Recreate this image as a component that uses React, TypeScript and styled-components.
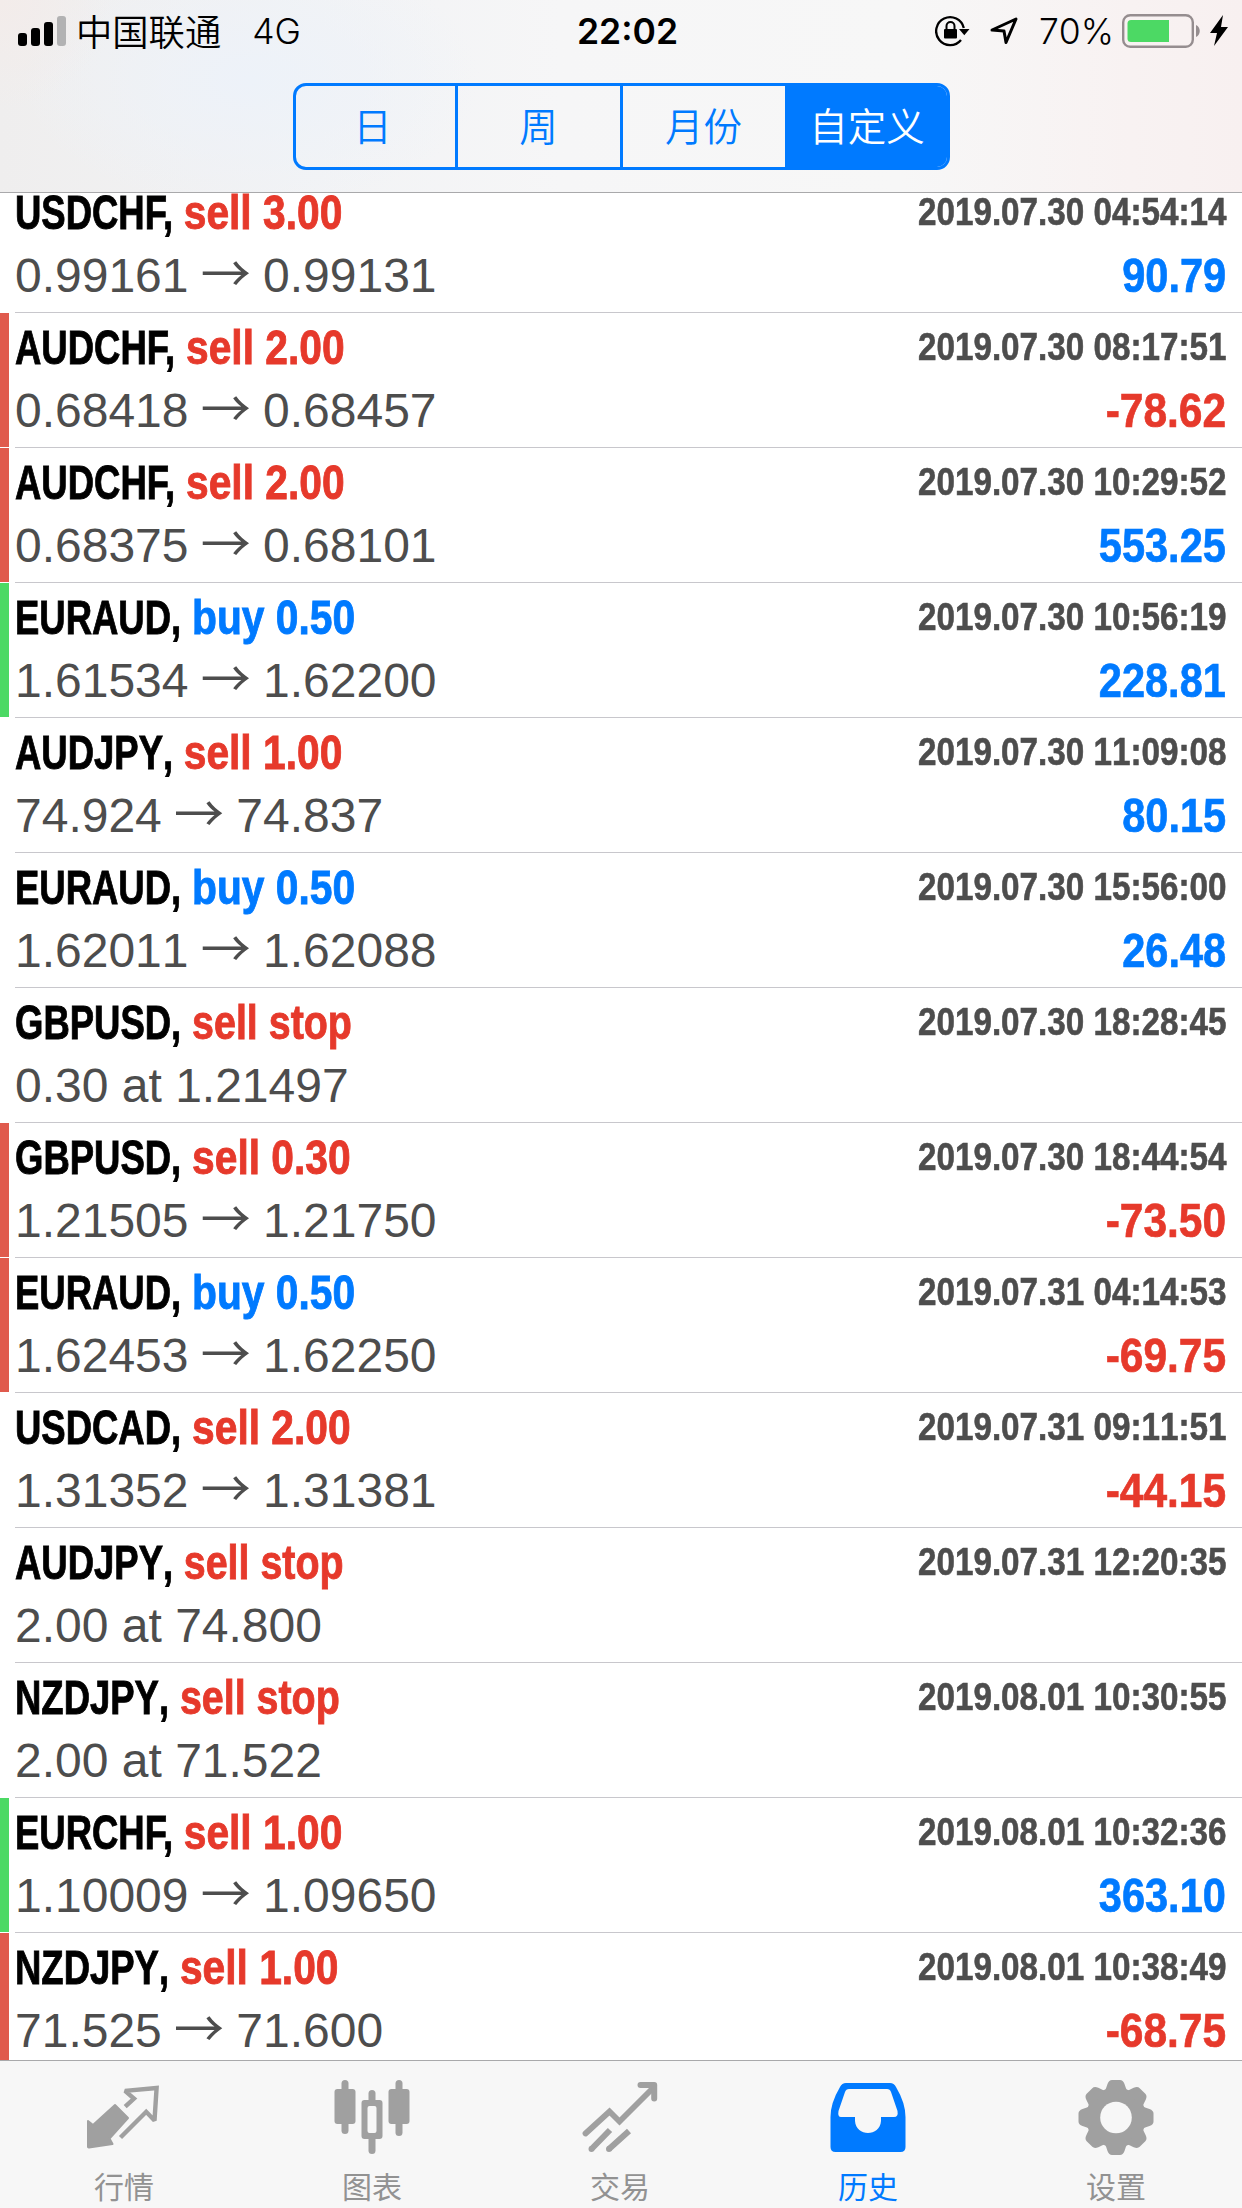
import React from 'react';
import styled, { createGlobalStyle } from 'styled-components';

const BLUE = '#007aff';
const RED = '#e6392b';
const GREY = '#4d4d4d';

const Global = createGlobalStyle`
  html, body { margin: 0; padding: 0; background: #fff; }
  * { box-sizing: border-box; }
`;

const Screen = styled.div`
  width: 1242px;
  height: 2208px;
  display: flex;
  flex-direction: column;
  overflow: hidden;
  background: #fff;
  font-family: 'Liberation Sans', 'Noto Sans CJK SC', sans-serif;
  font-kerning: none;
`;

const Header = styled.header`
  height: 193px;
  flex: none;
  display: flex;
  flex-direction: column;
  align-items: center;
  border-bottom: 1px solid #a9a9ab;
  background:
    radial-gradient(circle at 0 0, #f3ecea 0, rgba(243, 236, 234, 0) 110px),
    radial-gradient(ellipse 230px 130px at 250px 80px, #edf2f9 0, rgba(237, 242, 249, 0) 100%),
    linear-gradient(90deg, #efeeee 0, #f2f3f5 320px, #f6f6f7 560px, #f7f7f7 900px, #f8f2f2 1130px, #f8f0f0 1242px);
`;

const StatusBar = styled.div`
  width: 100%;
  height: 62px;
  padding: 0 14px 0 18px;
  display: grid;
  grid-template-columns: 1fr auto 1fr;
  align-items: center;
  color: #000;
  font-family: 'Inter', 'Noto Sans CJK SC', sans-serif;
  font-size: 36px;
`;

const StatusLeft = styled.div`
  display: flex;
  align-items: center;
`;

const StatusRight = styled.div`
  display: flex;
  align-items: center;
  justify-content: flex-end;
`;

const Signal = styled.div`
  display: flex;
  align-items: flex-end;
  gap: 4px;
  height: 30px;
  margin-right: 10px;
`;

const SignalBar = styled.i<{ $h: number; $off?: boolean }>`
  width: 9px;
  height: ${(p) => p.$h}px;
  border-radius: 3px;
  background: ${(p) => (p.$off ? '#b2b2b3' : '#000')};
`;

const Carrier = styled.span`
  padding-bottom: 2px;
  font-family: 'Noto Sans CJK SC', sans-serif;
  font-size: 36.3px;
  font-weight: 350;
  line-height: 60px;
`;

const Network = styled.span`
  margin-left: 31px;
  padding-top: 1px;
  font-size: 35.5px;
  font-weight: 350;
  line-height: 61px;
`;

const Clock = styled.span`
  margin-left: 9px;
  padding-top: 1px;
  font-size: 35.5px;
  font-weight: 600;
  line-height: 61px;
`;

const Percent = styled.span`
  margin: 0 8px 0 21px;
  padding-top: 1px;
  font-size: 35.5px;
  font-weight: 350;
  line-height: 61px;
`;

const Segments = styled.div`
  display: grid;
  grid-template-columns: 159px 165px 165px 162px;
  width: 657px;
  height: 87px;
  margin-top: 21px;
  border: 3px solid ${BLUE};
  border-radius: 13px;
  overflow: hidden;
`;

const Segment = styled.button<{ $on?: boolean }>`
  border: 0;
  border-left: 3px solid ${BLUE};
  padding: 0 0 5px;
  background: ${(p) => (p.$on ? BLUE : 'transparent')};
  color: ${(p) => (p.$on ? '#fff' : BLUE)};
  font-family: 'Noto Sans CJK SC', sans-serif;
  font-size: 38.5px;
  font-weight: 350;
  line-height: 76px;
  &:first-child { border-left: 0; padding-right: 5px; }
`;

const List = styled.main`
  flex: 1;
  min-height: 0;
  display: flex;
  flex-direction: column;
`;

const Row = styled.article`
  flex: none;
  height: 135px;
  display: flex;
  &:first-child { margin-top: -15px; }
`;

const Mark = styled.span<{ $kind?: 'sl' | 'tp' }>`
  width: 9px;
  height: 134px;
  margin-right: 6px;
  background: ${(p) => (p.$kind === 'sl' ? '#e05a4d' : p.$kind === 'tp' ? '#4cd964' : 'transparent')};
`;

const Body = styled.div`
  flex: 1;
  display: flex;
  flex-direction: column;
  padding: 5px 16px 0 0;
  border-bottom: 1px solid #c8c7cc;
`;

const Line = styled.div`
  display: flex;
  justify-content: space-between;
  height: 63px;
  line-height: 59px;
  white-space: nowrap;
`;

const Title = styled.div`
  font-size: 48px;
  font-weight: 700;
  color: #000;
  -webkit-text-stroke: 0.9px currentColor;
  transform: scaleX(0.76);
  transform-origin: 0 50%;
`;

const Pair = styled.span<{ $kern: boolean }>`
  font-kerning: ${(p) => (p.$kern ? 'normal' : 'none')};
`;

const Action = styled.span<{ $side: 'buy' | 'sell'; $pending: boolean }>`
  display: inline-block;
  margin-left: 14px;
  color: ${(p) => (p.$side === 'buy' ? BLUE : RED)};
  transform: scaleX(${(p) => (p.$pending ? 1.08 : 1.117)});
  transform-origin: 0 50%;
`;

const Time = styled.time`
  font-size: 38.5px;
  font-weight: 700;
  line-height: 58px;
  color: ${GREY};
  -webkit-text-stroke: 0.6px currentColor;
  transform: scaleX(0.863);
  transform-origin: 100% 50%;
`;

const Prices = styled.div`
  font-size: 48px;
  color: ${GREY};
`;

const Arrow = styled.span`
  display: inline-block;
  width: 74.5px;
  line-height: 40px;
  text-align: center;
  font-family: 'Noto Sans CJK SC', sans-serif;
  font-size: 50px;
  font-weight: 400;
`;

const Profit = styled.div<{ $loss: boolean }>`
  font-size: 48px;
  font-weight: 700;
  color: ${(p) => (p.$loss ? RED : BLUE)};
  -webkit-text-stroke: 0.7px currentColor;
  transform: scaleX(${(p) => (p.$loss ? 0.885 : 0.865)});
  transform-origin: 100% 50%;
`;

const TabBar = styled.nav`
  flex: none;
  height: 148px;
  border-top: 1px solid #a9a9ab;
  background: #f7f7f7;
  display: grid;
  grid-template-columns: repeat(5, 248px);
`;

const Tab = styled.a<{ $on?: boolean }>`
  display: flex;
  flex-direction: column;
  align-items: center;
  padding-top: 17px;
  color: ${(p) => (p.$on ? BLUE : '#a0a0a0')};
  svg { width: 78px; height: 78px; flex: none; }
`;

const TabLabel = styled.span<{ $on?: boolean }>`
  margin-top: 9px;
  color: ${(p) => (p.$on ? BLUE : '#929292')};
  font-family: 'Noto Sans CJK SC', sans-serif;
  font-size: 30px;
  line-height: 40px;
`;

const LockIcon = () => (
  <svg width="35" height="32" viewBox="0 0 35 32">
    <path d="M28.800 13A14 14 0 1 0 26 25" fill="none" stroke="#000" strokeWidth="2.300" />
    <path d="M24 14h10.500l-5.200 6.200z" fill="#000" />
    <rect x="9" y="14" width="13" height="9.500" rx="1" fill="#000" />
    <path d="M11.500 14v-3a4 4 0 0 1 8 0v3" fill="none" stroke="#000" strokeWidth="2" />
  </svg>
);

const Locate = styled.svg`
  margin: 0 -1px 0 19px;
`;

const Bolt = styled.svg`
  margin-left: 9px;
`;

const LocationIcon = () => (
  <Locate width="30" height="30" viewBox="0 0 30 30">
    <path d="M3 14L27 3L17 26.500L15 15z" fill="none" stroke="#000" strokeWidth="3" strokeLinejoin="round" />
  </Locate>
);

const BatteryIcon = () => (
  <svg width="79" height="34" viewBox="0 0 79 34">
    <rect x="1.200" y="1.200" width="69.600" height="31.600" rx="7" fill="none" stroke="#958d8f" strokeWidth="2.400" />
    <path d="M9 6H47V28H9a3.500 3.500 0 0 1-3.500-3.500V9.500A3.500 3.500 0 0 1 9 6z" fill="#4cd964" />
    <path d="M74 11c5 2 5 10 0 12z" fill="#958d8f" />
  </svg>
);

const BoltIcon = () => (
  <Bolt width="18" height="32" viewBox="0 0 18 32">
    <path d="M13 0L0 18h7L4 31L18 12h-7z" fill="#000" />
  </Bolt>
);

const QuotesIcon = () => (
  <svg viewBox="0 0 78 78">
    <path
      d="M3 43L8 47L30 27L43 40L24.500 60.500L27.500 66L4 69.500Q3 69.800 3 68.500z"
      fill="currentColor"
      stroke="currentColor"
      strokeWidth="2"
      strokeLinejoin="round"
    />
    <path
      d="M40.200 28.700L49 20.500L40 12.900L71.600 10L69.500 42.500L61.200 33.800L35.500 59.500"
      fill="none"
      stroke="currentColor"
      strokeWidth="4.400"
      strokeMiterlimit="2"
    />
  </svg>
);

const ChartIcon = () => (
  <svg viewBox="0 0 78 78" fill="currentColor">
    <rect x="8.500" y="2" width="7" height="54" rx="3.500" />
    <rect x="1.500" y="11" width="21" height="35" rx="3" />
    <rect x="62.500" y="2" width="7" height="56" rx="3.500" />
    <rect x="55.500" y="11" width="21" height="35" rx="3" />
    <rect x="35.500" y="12" width="7" height="14" rx="3.500" />
    <rect x="35.500" y="56" width="7" height="20" rx="3.500" />
    <path fillRule="evenodd" d="M31.500 22h15q3 0 3 3v33q0 3-3 3h-15q-3 0-3-3V25q0-3 3-3zM36.500 28q-2 0-2 2v23q0 2 2 2h5q2 0 2-2V30q0-2-2-2z" />
  </svg>
);

const TradeIcon = () => (
  <svg viewBox="0 0 78 78" fill="none" stroke="currentColor">
    <path d="M4.500 55.500L28.500 33.500L38.500 43.500L72 10" strokeWidth="5.800" strokeLinecap="round" />
    <path d="M59.500 7H73.200V20.500" strokeWidth="6" strokeLinecap="round" strokeLinejoin="round" />
    <path d="M10.500 71L29 52M28 71L48 53" strokeWidth="6" />
    <path d="M10.500 71h0M28 71h0" strokeWidth="6" strokeLinecap="round" />
  </svg>
);

const HistoryIcon = () => (
  <svg viewBox="0 0 78 78">
    <path
      fillRule="evenodd"
      fill="currentColor"
      d="M17 5H61Q65 5 67 9Q76.500 25 76.500 39V69Q76.500 74 71.500 74H6.500Q1.500 74 1.500 69V39Q1.500 25 11 9Q13 5 17 5zM20 11Q17 11 16 14L9.500 33Q8.500 39 12 39H26V43C27 59 51 59 52 43V39H65Q69.500 39 68.500 33L62 14Q61 11 58 11z"
    />
  </svg>
);

const GearIcon = () => (
  <svg viewBox="0 0 78 78">
    <defs>
      <mask id="gear-hole">
        <rect width="78" height="80" fill="#fff" />
        <circle cx="39" cy="39.500" r="15.800" fill="#000" />
      </mask>
    </defs>
    <g fill="currentColor" mask="url(#gear-hole)">
      <circle cx="39" cy="39.500" r="30" />
      {[0, 45, 90, 135, 180, 225, 270, 315].map((a) => (
        <path key={a} d="M27.500 13.500Q29 11 30.500 6Q32 2 35 2H43Q46 2 47.500 6Q49 11 50.500 13.500z" transform={`rotate(${a} 39 39.5)`} />
      ))}
    </g>
  </svg>
);

type Deal = {
  symbol: string;
  side: 'buy' | 'sell';
  what: string;
  time: string;
  from?: string;
  to?: string;
  note?: string;
  profit?: string;
  mark?: 'sl' | 'tp';
};

const deals: Deal[] = [
  { symbol: 'USDCHF', side: 'sell', what: '3.00', time: '2019.07.30 04:54:14', from: '0.99161', to: '0.99131', profit: '90.79' },
  { symbol: 'AUDCHF', side: 'sell', what: '2.00', time: '2019.07.30 08:17:51', from: '0.68418', to: '0.68457', profit: '-78.62', mark: 'sl' },
  { symbol: 'AUDCHF', side: 'sell', what: '2.00', time: '2019.07.30 10:29:52', from: '0.68375', to: '0.68101', profit: '553.25', mark: 'sl' },
  { symbol: 'EURAUD', side: 'buy', what: '0.50', time: '2019.07.30 10:56:19', from: '1.61534', to: '1.62200', profit: '228.81', mark: 'tp' },
  { symbol: 'AUDJPY', side: 'sell', what: '1.00', time: '2019.07.30 11:09:08', from: '74.924', to: '74.837', profit: '80.15' },
  { symbol: 'EURAUD', side: 'buy', what: '0.50', time: '2019.07.30 15:56:00', from: '1.62011', to: '1.62088', profit: '26.48' },
  { symbol: 'GBPUSD', side: 'sell', what: 'stop', time: '2019.07.30 18:28:45', note: '0.30 at 1.21497' },
  { symbol: 'GBPUSD', side: 'sell', what: '0.30', time: '2019.07.30 18:44:54', from: '1.21505', to: '1.21750', profit: '-73.50', mark: 'sl' },
  { symbol: 'EURAUD', side: 'buy', what: '0.50', time: '2019.07.31 04:14:53', from: '1.62453', to: '1.62250', profit: '-69.75', mark: 'sl' },
  { symbol: 'USDCAD', side: 'sell', what: '2.00', time: '2019.07.31 09:11:51', from: '1.31352', to: '1.31381', profit: '-44.15' },
  { symbol: 'AUDJPY', side: 'sell', what: 'stop', time: '2019.07.31 12:20:35', note: '2.00 at 74.800' },
  { symbol: 'NZDJPY', side: 'sell', what: 'stop', time: '2019.08.01 10:30:55', note: '2.00 at 71.522' },
  { symbol: 'EURCHF', side: 'sell', what: '1.00', time: '2019.08.01 10:32:36', from: '1.10009', to: '1.09650', profit: '363.10', mark: 'tp' },
  { symbol: 'NZDJPY', side: 'sell', what: '1.00', time: '2019.08.01 10:38:49', from: '71.525', to: '71.600', profit: '-68.75', mark: 'sl' },
];

const tabs = [
  { label: '行情', Icon: QuotesIcon },
  { label: '图表', Icon: ChartIcon },
  { label: '交易', Icon: TradeIcon },
  { label: '历史', Icon: HistoryIcon, on: true },
  { label: '设置', Icon: GearIcon },
];

export default function App() {
  return (
    <Screen>
      <Global />
      <Header>
        <StatusBar>
          <StatusLeft>
            <Signal>
              <SignalBar $h={13} />
              <SignalBar $h={18} />
              <SignalBar $h={24} />
              <SignalBar $h={30} $off />
            </Signal>
            <Carrier>中国联通</Carrier>
            <Network>4G</Network>
          </StatusLeft>
          <Clock>22:02</Clock>
          <StatusRight>
            <LockIcon />
            <LocationIcon />
            <Percent>70%</Percent>
            <BatteryIcon />
            <BoltIcon />
          </StatusRight>
        </StatusBar>
        <Segments>
          <Segment>日</Segment>
          <Segment>周</Segment>
          <Segment>月份</Segment>
          <Segment $on>自定义</Segment>
        </Segments>
      </Header>
      <List>
        {deals.map((d) => (
          <Row key={d.time}>
            <Mark $kind={d.mark} />
            <Body>
              <Line>
                <Title>
                  <Pair $kern={d.symbol.endsWith('F')}>{`${d.symbol},`}</Pair>
                  <Action $side={d.side} $pending={!!d.note}>{`${d.side} ${d.what}`}</Action>
                </Title>
                <Time>{d.time}</Time>
              </Line>
              <Line>
                <Prices>
                  {d.note ?? (
                    <>
                      {d.from}
                      <Arrow>→</Arrow>
                      {d.to}
                    </>
                  )}
                </Prices>
                {d.profit && <Profit $loss={d.profit.startsWith('-')}>{d.profit}</Profit>}
              </Line>
            </Body>
          </Row>
        ))}
      </List>
      <TabBar>
        {tabs.map(({ label, Icon, on }) => (
          <Tab key={label} $on={on}>
            <Icon />
            <TabLabel $on={on}>{label}</TabLabel>
          </Tab>
        ))}
      </TabBar>
    </Screen>
  );
}
